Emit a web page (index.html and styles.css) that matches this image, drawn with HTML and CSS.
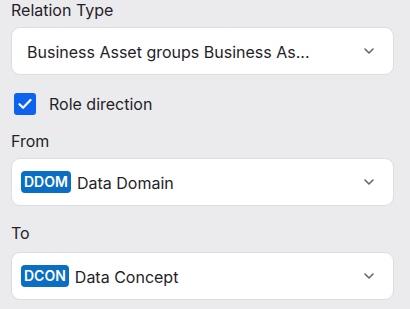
FILE: index.html
```html
<!DOCTYPE html>
<html lang="en">
  <head>
    <meta charset="UTF-8" />
    <meta name="viewport" content="width=device-width, initial-scale=1.0" />
    <title>Relation</title>
    <link rel="stylesheet" href="styles.css">
  </head>
  <body>
    <div class="panel">
      <div class="field">
        <label class="field-label">Relation Type</label>
        <div class="select">
          <span class="select-text">Business Asset groups Business As...</span>
          <svg class="chevron" width="10" height="6" viewBox="0 0 10 6"><path d="M1 1l4 4 4-4" fill="none" stroke="#5f6876" stroke-width="1.6" stroke-linecap="round" stroke-linejoin="round"/></svg>
        </div>
      </div>

      <label class="check-row">
        <span class="checkbox">
          <svg width="14" height="12" viewBox="0 0 14 12"><path d="M1.5 6.2l3.6 3.6L12.5 2" fill="none" stroke="#fff" stroke-width="2.2" stroke-linecap="round" stroke-linejoin="round"/></svg>
        </span>
        <span>Role direction</span>
      </label>

      <div class="field from">
        <label class="field-label">From</label>
        <div class="select with-badge">
          <span class="select-text"><span class="badge">DDOM</span>Data Domain</span>
          <svg class="chevron" width="10" height="6" viewBox="0 0 10 6"><path d="M1 1l4 4 4-4" fill="none" stroke="#5f6876" stroke-width="1.6" stroke-linecap="round" stroke-linejoin="round"/></svg>
        </div>
      </div>

      <div class="field to">
        <label class="field-label">To</label>
        <div class="select with-badge">
          <span class="select-text"><span class="badge">DCON</span>Data Concept</span>
          <svg class="chevron" width="10" height="6" viewBox="0 0 10 6"><path d="M1 1l4 4 4-4" fill="none" stroke="#5f6876" stroke-width="1.6" stroke-linecap="round" stroke-linejoin="round"/></svg>
        </div>
      </div>
    </div>
  </body>
</html>
```

FILE: styles.css
```css
body {
  margin: 0;
  background-color: #ebebed;
  font-family: Inter, "Noto Sans", sans-serif;
  color: #1f2329;
}
.panel {
  padding: 0 16px 0 11px;
}
.field-label {
  display: block;
  font-size: 16px;
  line-height: 20px;
  margin-bottom: 7px;
}
.select {
  display: flex;
  align-items: center;
  justify-content: space-between;
  height: 46px;
  padding: 0 19px 0 15px;
  background-color: #fff;
  border: 1px solid #dcdde1;
  border-radius: 9px;
  font-size: 16px;
}
.select.with-badge {
  padding-left: 9px;
}
.select-text {
  display: flex;
  align-items: center;
  padding-top: 2px;
}
.chevron {
  flex-shrink: 0;
}
.badge {
  display: inline-block;
  background-color: #0a6ec4;
  color: #fff;
  font-size: 14px;
  font-weight: 600;
  line-height: 22px;
  padding: 0 3px;
  border-radius: 4px;
  margin-right: 6px;
  margin-top: -2px;
}
.check-row {
  display: flex;
  align-items: center;
  gap: 13px;
  margin: 18px 0 0 3px;
  font-size: 16px;
  line-height: 22px;
}
.checkbox {
  display: flex;
  align-items: center;
  justify-content: center;
  width: 22px;
  height: 22px;
  background-color: #0d63ee;
  border-radius: 3px;
}
.field.from {
  margin-top: 16px;
}
.field.to {
  margin-top: 17px;
}
.field.to .field-label {
  margin-bottom: 9px;
}
```
